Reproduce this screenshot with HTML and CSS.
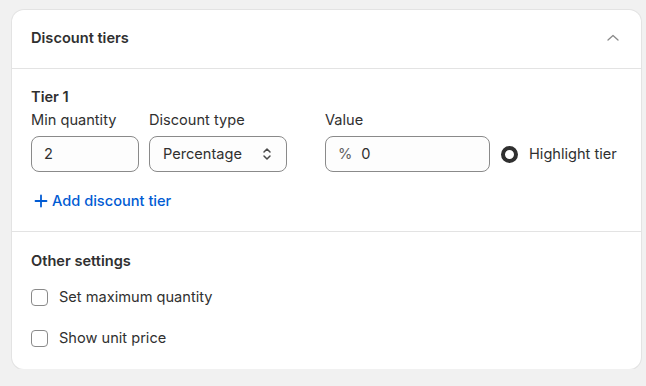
FILE: index.html
```html
<!DOCTYPE html>
<html>
<head>
<meta charset="utf-8">
<link rel="stylesheet" href="styles.css">
</head>
<body>
<div class="card">
  <div class="card-header">
    <h2 class="card-title">Discount tiers</h2>
    <svg class="chev" width="14" height="14" viewBox="0 0 14 14"><path d="M2 9 L7 4.5 L12 9" fill="none" stroke="#8a8a8a" stroke-width="1.3" stroke-linecap="round" stroke-linejoin="round"/></svg>
  </div>
  <div class="section tiers">
    <div class="tier-title">Tier 1</div>
    <div class="tier-row">
      <div class="field f-qty">
        <label class="lbl">Min quantity</label>
        <div class="input">2</div>
      </div>
      <div class="field f-type">
        <label class="lbl">Discount type</label>
        <div class="input select">Percentage
          <svg class="updown" width="12" height="16" viewBox="0 0 12 16"><path d="M3 6 L6 3 L9 6 M3 10 L6 13 L9 10" fill="none" stroke="#4a4a4a" stroke-width="1.5" stroke-linecap="round" stroke-linejoin="round"/></svg>
        </div>
      </div>
      <div class="field f-val">
        <label class="lbl">Value</label>
        <div class="input"><span class="prefix">%</span>0</div>
      </div>
      <div class="highlight">
        <span class="radio"></span>
        <span>Highlight tier</span>
      </div>
    </div>
    <div class="add">
      <svg width="14" height="14" viewBox="0 0 14 14"><path d="M7 1.5 V12.5 M1.5 7 H12.5" stroke="#005bd3" stroke-width="1.8" stroke-linecap="round"/></svg>
      <span>Add discount tier</span>
    </div>
  </div>
  <div class="section other">
    <div class="tier-title">Other settings</div>
    <div class="check"><span class="box"></span>Set maximum quantity</div>
    <div class="check"><span class="box"></span>Show unit price</div>
  </div>
</div>
</body>
</html>
```
FILE: styles.css
```css
* { box-sizing: border-box; }
html, body { margin: 0; }
body {
  background: #f1f1f1;
  font-family: Inter, "Noto Sans", sans-serif;
  font-size: 14.6px;
  color: #303030;
  padding: 10px 5px 0 12px;
}
.card {
  background: #fff;
  border-radius: 12px;
  box-shadow: 0 0 0 1px #e3e3e3, 0 1px 1px rgba(0,0,0,0.08);
  width: 629px;
  height: 359px;
  overflow: hidden;
}
.card-header {
  height: 59px;
  padding: 0 19px 0 19px;
  display: flex;
  align-items: center;
  justify-content: space-between;
  border-bottom: 1px solid #e3e3e3;
}
.card-title {
  margin: 0 0 3px 0;
  font-size: 14.6px;
  font-weight: 600;
  color: #303030;
}
.chev { margin-right: 2px; margin-bottom: 2px; }
.section { padding: 0 19px; }
.tiers {
  padding-top: 18px;
  height: 163px;
  border-bottom: 1px solid #e3e3e3;
}
.tier-title {
  font-weight: 600;
  line-height: 20px;
}
.tier-row {
  display: flex;
  align-items: flex-end;
}
.field { display: flex; flex-direction: column; }
.lbl { line-height: 20px; margin-top: 3px; margin-bottom: 6px; }
.f-qty { width: 108px; margin-right: 10px; }
.f-type { width: 138px; margin-right: 38px; }
.f-val { width: 165px; margin-right: 10px; }
.input {
  height: 36px;
  border: 1px solid #8a8a8a;
  border-radius: 8px;
  display: flex;
  align-items: center;
  padding: 0 12px;
  background: #fdfdfd;
}
.select { justify-content: space-between; padding-right: 13px; padding-left: 13px; }
.prefix { margin-right: 9px; color: #616161; }
.highlight {
  display: flex;
  align-items: center;
  height: 36px;
  gap: 11px;
}
.radio {
  width: 17px;
  height: 17px;
  border-radius: 50%;
  border: 4.5px solid #303030;
  background: #fff;
  margin-left: 1px;
}
.add {
  display: flex;
  align-items: center;
  gap: 4px;
  color: #005bd3;
  font-weight: 500;
  margin-top: 19px;
  margin-left: 3px;
  line-height: 20px;
}
.other { padding-top: 19px; }
.check {
  display: flex;
  align-items: center;
  gap: 11px;
  line-height: 20px;
  margin-top: 16px;
}
.check + .check { margin-top: 21px; }
.box {
  width: 17px;
  height: 17px;
  border: 1px solid #8a8a8a;
  border-radius: 4px;
  background: #fff;
}
```
